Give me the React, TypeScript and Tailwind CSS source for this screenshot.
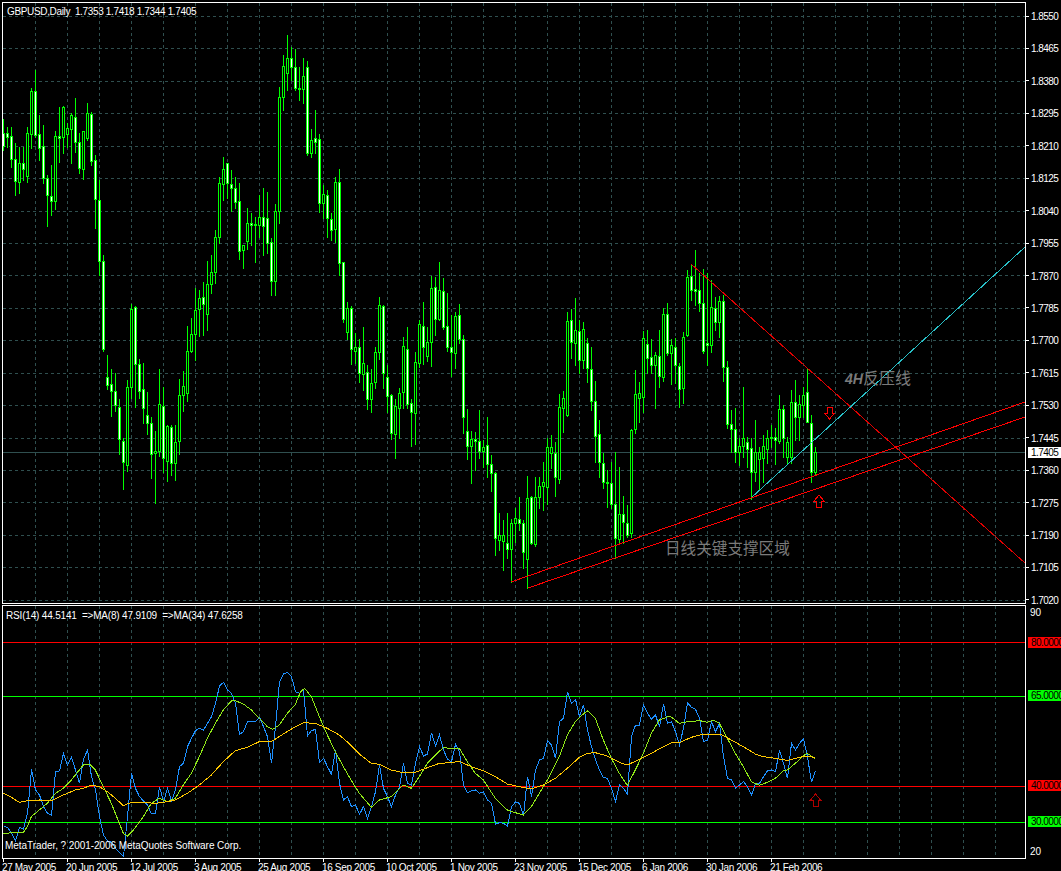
import React from 'react';

// [high, bodyTop, bodyBottom, low, filled] in page pixels, one bar every 4px from x=3
const BARS: number[][] = [
  [119,133,146,150,1],[127,133,137,147,1],[127,136,159,167,1],[143,159,181,195,1],[147,163,182,193,0],
  [147,163,169,180,1],[127,133,176,182,0],[88,91,134,148,0],[70,91,135,137,1],[115,134,148,160,1],
  [125,146,178,183,1],[175,178,195,226,1],[165,196,201,215,1],[131,136,201,209,0],[107,136,138,162,1],
  [106,107,137,153,0],[123,128,134,147,0],[113,115,129,163,0],[98,117,142,152,1],[133,142,168,173,1],
  [131,131,169,179,0],[103,113,138,140,0],[112,114,161,165,1],[155,160,199,228,1],[180,200,261,275,1],
  [255,261,349,351,1],[355,377,385,389,1],[369,384,391,416,1],[373,391,405,411,1],[399,407,439,454,1],
  [438,441,462,489,1],[380,387,465,471,0],[304,309,387,398,0],[306,307,364,407,1],[359,364,391,398,1],
  [363,389,408,423,1],[392,415,423,434,1],[417,423,454,478,1],[431,451,453,503,0],[369,404,451,456,0],
  [387,406,458,472,1],[425,426,461,481,0],[425,427,463,475,1],[425,442,463,480,0],[379,395,441,454,0],
  [371,386,395,411,0],[326,351,393,401,0],[318,334,351,352,0],[288,310,334,360,0],[290,298,309,336,0],
  [282,297,304,335,1],[261,284,314,330,0],[255,272,284,293,0],[230,237,272,283,0],[177,183,237,243,0],
  [157,169,184,200,0],[163,163,183,198,1],[170,184,188,211,1],[177,188,202,208,1],[183,201,251,259,1],
  [245,245,250,268,0],[208,223,241,249,0],[213,223,225,245,1],[217,224,225,262,1],[195,217,225,237,0],
  [188,217,226,255,1],[192,218,243,253,1],[238,242,281,295,1],[204,211,281,295,0],[87,97,211,223,0],
  [55,66,97,110,0],[35,58,73,90,0],[47,58,67,80,1],[49,67,88,90,1],[67,88,89,100,1],
  [58,76,89,103,0],[61,67,153,155,1],[129,140,153,157,0],[110,138,142,153,1],[134,139,203,212,1],
  [185,194,203,218,0],[190,195,218,237,1],[213,219,230,240,1],[177,182,229,242,0],[169,182,263,275,1],
  [262,262,319,322,1],[302,308,332,339,0],[306,308,349,364,1],[333,347,351,363,0],[339,347,373,382,1],
  [327,363,374,390,0],[365,372,399,409,1],[369,383,399,412,0],[347,352,382,388,0],[297,305,352,359,0],
  [305,306,373,388,1],[365,377,396,412,1],[394,395,433,439,1],[399,406,434,458,0],[388,393,408,438,0],
  [337,346,392,408,0],[327,349,404,408,1],[399,403,412,446,1],[352,362,413,444,0],[320,324,363,367,0],
  [302,326,347,364,1],[327,342,356,361,0],[276,288,342,366,0],[277,287,319,335,1],[262,290,319,320,0],
  [278,291,327,329,1],[293,326,347,351,1],[315,347,352,376,1],[312,316,353,368,0],[304,315,339,343,1],
  [335,339,417,433,1],[409,431,446,459,1],[431,439,446,483,0],[432,439,441,470,1],[410,441,451,458,1],
  [440,447,451,467,0],[417,445,464,477,1],[455,464,473,491,1],[472,473,538,555,1],[513,535,540,550,0],
  [520,535,541,570,0],[513,543,549,558,1],[519,523,549,582,0],[508,518,523,542,0],[497,519,523,530,1],
  [520,523,552,568,1],[476,498,559,588,0],[496,497,543,544,1],[477,497,544,546,0],[477,486,497,508,0],
  [462,482,486,510,0],[438,447,487,504,0],[435,447,453,468,0],[442,453,477,496,1],[394,407,479,483,0],
  [391,398,408,432,0],[312,321,415,416,0],[309,320,342,358,1],[298,330,343,365,0],[320,331,360,373,1],
  [322,329,360,368,0],[338,343,368,382,1],[347,369,401,410,1],[381,401,436,462,1],[420,434,462,477,1],
  [453,463,482,488,1],[470,482,483,507,1],[462,483,504,508,1],[452,504,538,558,1],[467,514,539,544,0],
  [496,514,522,543,1],[505,523,535,537,1],[429,430,533,537,0],[370,394,429,433,0],[382,393,398,422,0],
  [331,338,397,412,0],[330,344,358,373,1],[339,357,365,373,1],[352,355,365,408,0],[330,356,376,387,1],
  [308,314,377,381,0],[303,314,353,355,1],[339,345,353,384,0],[338,347,365,383,1],[363,366,389,407,1],
  [332,337,388,403,0],[270,277,335,336,0],[264,276,290,300,1],[250,289,291,305,1],[273,290,303,311,1],
  [269,303,351,353,1],[273,343,345,365,1],[280,307,345,352,0],[297,308,322,330,1],[296,301,322,337,0],
  [295,301,367,381,1],[361,367,424,428,1],[410,424,429,452,1],[408,429,452,462,1],[438,446,452,465,0],
  [387,438,446,457,0],[437,442,449,467,1],[438,448,472,499,1],[420,452,472,481,0],[447,452,459,490,0],
  [435,446,458,482,0],[430,438,449,463,0],[425,437,438,447,1],[428,437,440,464,1],[395,409,441,443,0],
  [405,409,438,457,1],[437,442,457,463,0],[390,402,457,463,0],[380,402,417,440,1],[395,404,417,440,0],
  [387,395,405,417,0],[368,392,422,422,1],[415,423,472,482,1],[447,452,472,475,0],
];

const PRICE_LABELS = ['1.8550','1.8465','1.8380','1.8295','1.8210','1.8125','1.8040','1.7955','1.7870','1.7785','1.7700','1.7615','1.7530','1.7445','1.7360','1.7275','1.7190','1.7105','1.7020'];
const GRID_Y = [16,48,81,113,146,178,211,243,275,308,340,373,405,438,470,502,535,567,600];
const GRID_X = Array.from({ length: 31 }, (_, i) => 35 + i * 32);
const DATES = ['27 May 2005','20 Jun 2005','12 Jul 2005','3 Aug 2005','25 Aug 2005','16 Sep 2005','10 Oct 2005','1 Nov 2005','23 Nov 2005','15 Dec 2005','6 Jan 2006','30 Jan 2006','21 Feb 2006'];

// RSI values as y per bar, measured at 3x from y=600
const RSI_Y = [680,682,700,723,682,688,640,508,570,585,620,640,646,514,513,460,495,472,510,550,478,450,530,570,650,705,723,727,745,757,770,650,520,565,590,603,615,642,640,560,605,565,603,570,500,490,440,415,392,385,390,370,350,310,258,247,270,280,310,403,395,365,365,365,352,380,410,490,380,245,222,217,230,275,280,270,408,392,388,488,475,500,523,450,550,600,590,
  620,615,643,620,655,620,575,495,565,590,620,585,560,490,550,555,490,440,468,462,398,438,405,450,478,485,433,455,555,578,572,570,580,575,600,610,672,668,670,678,620,606,610,648,530,590,510,480,475,422,435,475,365,355,275,310,298,350,315,390,440,480,510,533,535,565,605,555,565,583,410,375,375,315,340,358,345,380,312,370,365,395,435,385,308,322,328,355,
  425,420,365,395,370,470,535,540,565,555,545,560,585,550,550,530,512,510,515,450,490,535,430,450,430,417,470,547,513];

// smoothed averages as [x, y] pairs, measured at 3x
const MA8: number[][] = [[8,700],[70,697],[82,680],[94,650],[118,630],[142,610],[166,580],[190,565],[214,540],[238,510],[250,495],[270,493],[286,510],[310,560],[334,610],[358,670],[370,700],[382,708],[400,690],[430,650],[454,610],[478,595],[502,605],[526,595],[550,555],[574,520],[598,470],[622,415],[646,370],[670,330],[694,303],[706,302],[730,312],[754,330],[778,355],[802,380],[818,388],[838,375],[862,340],[886,313],[902,275],[914,265],[934,290],[958,350],[982,405],[1006,455],[1030,500],[1050,535],
  [1078,580],[1114,622],[1138,600],[1174,590],[1210,555],[1234,565],[1258,530],[1282,490],[1306,465],[1330,443],[1354,445],[1378,445],[1402,485],[1426,520],[1450,540],[1486,595],[1522,630],[1546,638],[1570,645],[1594,620],[1618,580],[1642,540],[1678,470],[1702,405],[1726,365],[1750,342],[1762,332],[1786,355],[1810,420],[1834,475],[1858,520],[1882,556],[1906,510],[1930,460],[1954,400],[1978,360],[2010,348],[2038,370],[2062,365],[2100,362],[2122,367],[2140,361],[2158,370],[2182,415],[2206,460],[2230,500],[2254,545],[2278,556],[2302,547],[2326,535],[2350,512],[2362,510],[2386,490],[2410,467],[2422,460],[2444,475]];

const MA34: number[][] = [[8,578],[34,592],[58,607],[82,602],[118,600],[154,603],[178,590],[202,580],[226,570],[250,565],[274,555],[298,560],[322,575],[346,595],[370,617],[394,607],[430,607],[466,610],[502,605],[526,600],[562,580],[598,555],[634,525],[670,485],[706,452],[742,442],[778,425],[814,425],[850,402],[886,380],[910,368],[946,370],[982,385],[1018,405],[1050,433],
  [1078,462],[1114,490],[1138,493],[1174,510],[1210,518],[1246,517],[1282,503],[1318,490],[1354,488],[1378,484],[1414,500],[1450,512],[1486,530],[1522,552],[1558,560],[1594,567],[1630,555],[1666,535],[1702,505],[1738,472],[1762,460],[1786,458],[1822,468],[1858,487],[1882,495],[1918,478],[1954,460],[1990,440],[2014,428],[2038,428],[2074,412],[2100,405],[2134,404],[2164,404],[2194,420],[2230,440],[2266,462],[2290,470],[2326,475],[2362,481],[2398,472],[2422,468],[2444,473]];

const toPoints = (pts: number[][]) => pts.map(([x, y]) => `${x / 3},${600 + y / 3}`).join(' ');
const rsiPoints = RSI_Y.map((y, i) => `${3.5 + i * 4},${600 + y / 3}`).join(' ');

const Grid = ({ rows, top, bottom }: { rows: number[]; top: number; bottom: number }) => (
  <g stroke="#2f4f4f" strokeDasharray="3 3">
    {rows.map(y => <line key={y} x1={3} x2={1025} y1={y + 0.5} y2={y + 0.5} />)}
    {GRID_X.map(x => <line key={x} x1={x + 0.5} x2={x + 0.5} y1={top} y2={bottom} />)}
  </g>
);

const Candle = ({ bar, index }: { bar: number[]; index: number }) => {
  const [high, bodyTop, bodyBottom, low, filled] = bar;
  const x = 3 + index * 4;
  return (
    <g>
      <rect x={x} y={high} width={1} height={low - high + 1} fill="#00ff00" />
      <rect x={x - 1} y={bodyTop} width={3} height={bodyBottom - bodyTop + 1} fill="#00ff00" />
      {bodyBottom - bodyTop > 1 && (
        <rect x={x} y={bodyTop + 1} width={1} height={bodyBottom - bodyTop - 1} fill={filled ? '#ffffff' : '#000000'} />
      )}
    </g>
  );
};

const Arrow = ({ x, y, down, color }: { x: number; y: number; down?: boolean; color: string }) => {
  const d = down ? -1 : 1;
  const points = [[0, 0], [5, 6], [2.5, 6], [2.5, 12], [-2.5, 12], [-2.5, 6], [-5, 6]]
    .map(([px, py]) => `${x + px},${y + py * d}`)
    .join(' ');
  return <polygon points={points} fill="none" stroke={color} />;
};

const LevelBox = ({ label, className }: { label: string; className: string }) => (
  <div className={`ml-[2px] h-[11px] pl-[3px] leading-[12px] tracking-[-0.55px] text-black overflow-hidden whitespace-nowrap ${className}`}>{label}</div>
);

export default function App() {
  return (
    <div className="w-[1061px] h-[871px] bg-black overflow-hidden pt-[2px] flex flex-col text-white text-[10px] font-['Liberation_Sans',Arial,sans-serif]">
      {/* price pane */}
      <div className="flex h-[602px] shrink-0">
        <div className="relative ml-[2px] w-[1024px] h-full border border-white">
          <svg width={1022} height={600} viewBox="3 3 1022 600" className="block" shapeRendering="crispEdges">
            <Grid rows={GRID_Y} top={3} bottom={603} />
            <line x1={3} x2={1025} y1={452.5} y2={452.5} stroke="#2f4f4f" />
            {BARS.map((bar, i) => <Candle key={i} bar={bar} index={i} />)}
            <line x1={691} y1={264} x2={1025} y2={563} stroke="#e00000" />
            <line x1={751} y1={498} x2={1025} y2={247} stroke="#28c0c8" />
            <line x1={511} y1={582} x2={1025} y2={402} stroke="#ff0000" />
            <line x1={528} y1={588} x2={1025} y2={417} stroke="#ff0000" />
            <Arrow x={829.5} y={419} down color="#ff0000" />
            <Arrow x={819} y={495} color="#ff0000" />
          </svg>
          <span className="absolute left-[4px] top-[3px] leading-[12px] tracking-[-0.35px] whitespace-pre">GBPUSD,Daily  1.7353 1.7418 1.7344 1.7405</span>
          <span className="absolute left-[842px] top-[364px] text-[#7a7a7a] text-[16px] leading-[20px] whitespace-nowrap font-['Noto_Sans_CJK_SC',sans-serif]">
            <b className="italic font-['Liberation_Sans',sans-serif] text-[14px]">4H</b>反压线
          </span>
          <span className="absolute left-[662px] top-[533px] text-[#7a7a7a] text-[15.6px] leading-[22px] whitespace-nowrap font-['Noto_Sans_CJK_SC',sans-serif]">日线关键支撑区域</span>
        </div>
        <div className="relative flex-1 h-[596px] mt-[8px] flex flex-col justify-between">
          {PRICE_LABELS.map(label => (
            <div key={label} className="flex items-center h-[12px]">
              <div className="w-[3px] h-px bg-white" />
              <span className="ml-[2px] pt-[2px] leading-[12px] tracking-[-0.55px]">{label}</span>
            </div>
          ))}
          <div className="absolute left-[2px] top-[437px] right-0 h-[11px] pl-[3px] bg-white text-black leading-[12px] tracking-[-0.55px]">1.7405</div>
        </div>
      </div>

      {/* RSI pane */}
      <div className="flex h-[254px] mt-px shrink-0">
        <div className="relative ml-[2px] w-[1024px] h-full border border-white">
          <svg width={1022} height={252} viewBox="3 606 1022 252" className="block" shapeRendering="crispEdges">
            <Grid rows={[]} top={606} bottom={858} />
            <line x1={3} x2={1025} y1={642.5} y2={642.5} stroke="#ff0000" />
            <line x1={3} x2={1025} y1={696.5} y2={696.5} stroke="#00ff00" />
            <line x1={3} x2={1025} y1={786.5} y2={786.5} stroke="#ff0000" />
            <line x1={3} x2={1025} y1={822.5} y2={822.5} stroke="#00ff00" />
            <polyline points={rsiPoints} fill="none" stroke="#1e90ff" />
            <polyline points={toPoints(MA8)} fill="none" stroke="#90e818" />
            <polyline points={toPoints(MA34)} fill="none" stroke="#ffc800" />
            <Arrow x={815.5} y={794} color="#b00000" />
          </svg>
          <span className="absolute left-[3px] top-[4px] leading-[12px] tracking-[-0.18px] whitespace-pre">RSI(14) 44.5141  =&gt;MA(8) 47.9109  =&gt;MA(34) 47.6258</span>
          <span className="absolute left-[2px] top-[234px] leading-[12px] tracking-[-0.06px] whitespace-nowrap">MetaTrader, ? 2001-2006 MetaQuotes Software Corp.</span>
        </div>
        <div className="flex-1 flex flex-col pt-[2px]">
          <div className="h-[12px] leading-[12px] pl-[4px]">90</div>
          <LevelBox label="80.0000" className="mt-[18px] bg-[#ff0000]" />
          <LevelBox label="65.0000" className="mt-[42px] bg-[#00ff00]" />
          <LevelBox label="40.0000" className="mt-[79px] bg-[#ff0000]" />
          <LevelBox label="30.0000" className="mt-[25px] bg-[#00ff00]" />
          <div className="mt-[19px] h-[12px] leading-[12px] pl-[4px]">20</div>
        </div>
      </div>

      {/* time axis */}
      <div className="flex pl-[2px] h-[12px] shrink-0">
        {DATES.map(date => (
          <div key={date} className="w-[64px] shrink-0">
            <div className="ml-px w-px h-[3px] bg-white" />
            <div className="pt-[2px] leading-[7px] tracking-[-0.35px] whitespace-nowrap">{date}</div>
          </div>
        ))}
      </div>
    </div>
  );
}
